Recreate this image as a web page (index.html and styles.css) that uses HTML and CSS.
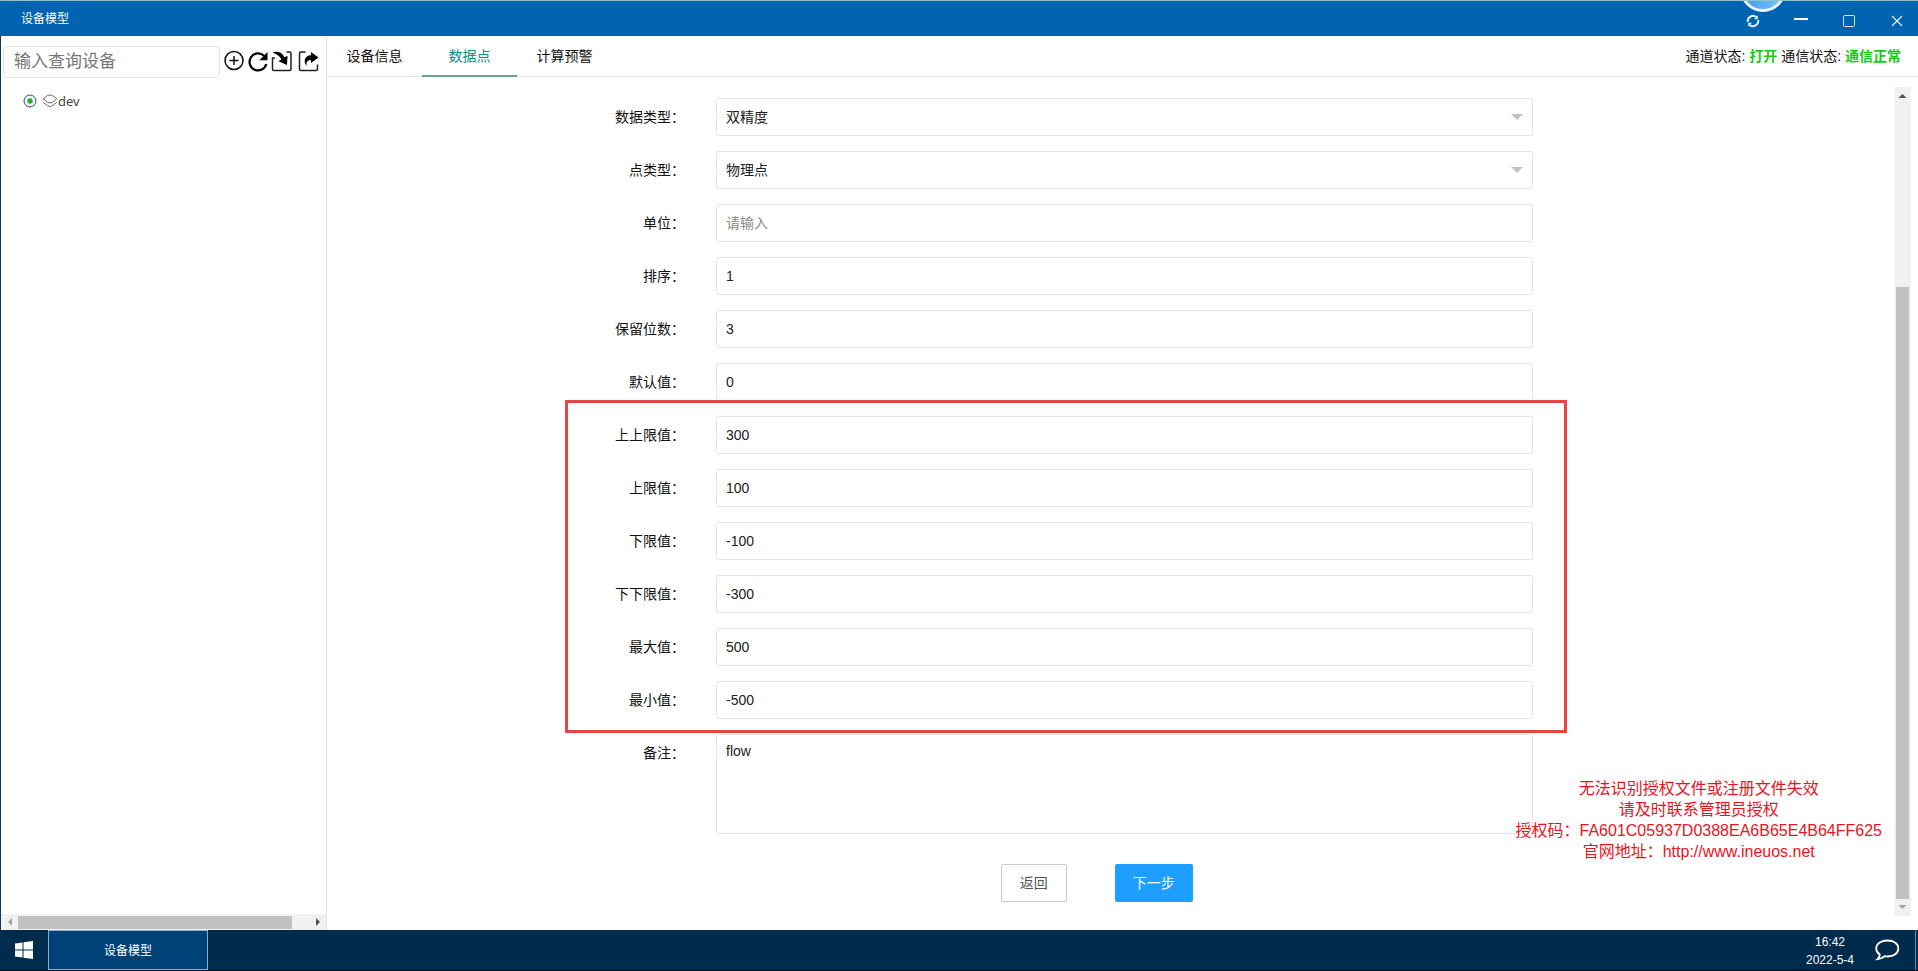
FILE: index.html
```html
<!DOCTYPE html>
<html lang="zh-CN">
<head>
<meta charset="utf-8">
<title>设备模型</title>
<link rel="stylesheet" href="styles.css">
</head>
<body>
<div class="desktop">
  <header class="titlebar">
    <h1 class="title">设备模型</h1>
    <div class="window-buttons">
      <button class="win-btn" aria-label="刷新"><svg width="14" height="14" viewBox="0 0 14 14"><g fill="none" stroke="#e6f1fa" stroke-width="2"><path d="M1.900 8A5.200 5.200 0 0 1 10.300 3"/><path d="M12.100 6A5.200 5.200 0 0 1 3.700 11"/></g><path d="M11.800 1.200V5.200H8zM2.200 12.800V8.800H6z" fill="#e6f1fa"/></svg></button>
      <button class="win-btn" aria-label="最小化"><svg width="14" height="14" viewBox="0 0 14 14"><path d="M0 5h14" stroke="#fff" stroke-width="2"/></svg></button>
      <button class="win-btn" aria-label="最大化"><svg width="14" height="14" viewBox="0 0 14 14"><rect x="1.500" y="1.500" width="11" height="11" rx="1" fill="none" stroke="#d5e6f5"/></svg></button>
      <button class="win-btn" aria-label="关闭"><svg width="14" height="14" viewBox="0 0 14 14"><path d="M2 2l10 10M12 2L2 12" stroke="#e6f1fa" stroke-width="1.200"/></svg></button>
    </div>
    <span class="bubble"></span>
  </header>

  <div class="window">
    <aside class="sidebar">
      <div class="search">
        <input class="search-input" type="text" placeholder="输入查询设备" aria-label="输入查询设备">
        <div class="tools">
          <button class="tool" aria-label="添加"><svg width="22" height="22" viewBox="0 0 22 22"><g fill="none" stroke="#111" stroke-width="1.500"><circle cx="11" cy="10.500" r="9"/><path d="M11 6v9M6.500 10.500h9"/></g></svg></button>
          <button class="tool" aria-label="刷新"><svg width="22" height="22" viewBox="0 0 22 22"><path d="M17 5.800A8.500 8.500 0 1 0 19.300 14" fill="none" stroke="#000" stroke-width="2.200"/><path d="M20.500 2v8.200h-8.200z"/></svg></button>
          <button class="tool" aria-label="导入"><svg width="22" height="22" viewBox="0 0 22 22"><path d="M4 8H1.500V19Q1.500 20.500 3 20.500H18.500Q20 20.500 20 19V3.500Q20 2 18.500 2H15.500" fill="none" stroke="#222" stroke-width="1.500"/><path d="M1.500 2.500C6 .8 11 2.200 13.500 7.200L16.500 5.800L16 15L7.500 11.200L10.500 9.300C8.500 6 5.500 3.800 1.500 2.500Z"/></svg></button>
          <button class="tool tool-last" aria-label="导出"><svg width="22" height="22" viewBox="0 0 22 22"><path d="M7.500 2H3Q1.500 2 1.500 3.500V19Q1.500 20.500 3 20.500H18Q19.500 20.500 19.500 19V14.500" fill="none" stroke="#222" stroke-width="1.500"/><path d="M13 2L20.500 7.500L13 13V10C9.500 10 8 12 8.500 16C4.800 11 7 5.500 13 5Z"/></svg></button>
        </div>
      </div>
      <div class="tree">
        <svg width="14" height="14" viewBox="0 0 14 14"><circle cx="7" cy="7" r="6" fill="#eef4fa" stroke="#2d4f72"/><circle cx="7" cy="7" r="2.700" fill="#2fae2f"/></svg>
        <a class="node" href="#"><svg width="16" height="14" viewBox="0 0 16 14"><g fill="none" stroke="#666"><path d="M1.200 4.800L5.500 1.500Q8 .3 10.500 1.500L14.800 4.800L10.500 8.300Q8 9.800 5.500 8.300Z"/><path d="M1.200 8.300L5.500 11.700Q8 13.300 10.500 11.700L14.800 8.300"/></g></svg>dev</a>
      </div>
      <div class="hscroll">
        <svg width="17" height="16" viewBox="0 0 17 16"><path d="M11 4v8L7 8z" fill="#a3a3a3"/></svg>
        <span class="htrack"><span class="hthumb"></span></span>
        <svg width="17" height="16" viewBox="0 0 17 16"><path d="M7 4v8l4-4z" fill="#505050"/></svg>
      </div>
    </aside>

    <main class="content">
      <nav class="tabs">
        <button class="tab">设备信息</button>
        <button class="tab tab-active">数据点</button>
        <button class="tab">计算预警</button>
        <p class="status">通道状态: <b>打开</b> 通信状态: <b>通信正常</b></p>
      </nav>
      <div class="body">
        <form class="form">
          <div class="row"><label for="dtype">数据类型：</label><div class="select"><select class="field" id="dtype"><option>双精度</option></select></div></div>
          <div class="row"><label for="ptype">点类型：</label><div class="select"><select class="field" id="ptype"><option>物理点</option></select></div></div>
          <div class="row"><label for="unit">单位：</label><input class="field" id="unit" type="text" placeholder="请输入"></div>
          <div class="row"><label for="sort">排序：</label><input class="field" id="sort" type="text" value="1"></div>
          <div class="row"><label for="digits">保留位数：</label><input class="field" id="digits" type="text" value="3"></div>
          <div class="row"><label for="default">默认值：</label><input class="field" id="default" type="text" value="0"></div>
          <div class="limits">
            <div class="row"><label for="hh">上上限值：</label><input class="field" id="hh" type="text" value="300"></div>
            <div class="row"><label for="h">上限值：</label><input class="field" id="h" type="text" value="100"></div>
            <div class="row"><label for="l">下限值：</label><input class="field" id="l" type="text" value="-100"></div>
            <div class="row"><label for="ll">下下限值：</label><input class="field" id="ll" type="text" value="-300"></div>
            <div class="row"><label for="max">最大值：</label><input class="field" id="max" type="text" value="500"></div>
            <div class="row"><label for="min">最小值：</label><input class="field" id="min" type="text" value="-500"></div>
            <span class="frame"></span>
          </div>
          <div class="row"><label for="note">备注：</label><textarea class="field note" id="note">flow</textarea></div>
          <div class="actions">
            <button class="btn" type="button">返回</button>
            <button class="btn btn-primary" type="button">下一步</button>
          </div>
        </form>
        <div class="vscroll">
          <svg width="17" height="17" viewBox="0 0 17 17"><path d="M4.500 11h8l-4-4z" fill="#505050"/></svg>
          <span class="vtrack"><span class="vthumb"></span></span>
          <svg width="17" height="17" viewBox="0 0 17 17"><path d="M4.500 6h8l-4 4z" fill="#a3a3a3"/></svg>
        </div>
      </div>
    </main>
  </div>

  <div class="license">
    <p>无法识别授权文件或注册文件失效</p>
    <p>请及时联系管理员授权</p>
    <p>授权码：FA601C05937D0388EA6B65E4B64FF625</p>
    <p>官网地址：http://www.ineuos.net</p>
  </div>

  <footer class="taskbar">
    <button class="start" aria-label="开始"><svg width="18" height="18" viewBox="0 0 18 18" fill="#fff"><path d="M0 2.600L7.500 1.500V8.500H0zM8.500 1.300L18 0V8.500H8.500zM0 9.500H7.500V16.500L0 15.400zM8.500 9.500H18V18L8.500 16.700z"/></svg></button>
    <button class="task">设备模型</button>
    <div class="clock"><span>16:42</span><span>2022-5-4</span></div>
    <button class="chat" aria-label="消息"><svg width="26" height="24" viewBox="0 0 26 24"><path d="M13.500 2.500C20 2.500 24.300 5.800 24.300 10.500S20 18.500 13.500 18.500Q12 18.500 10.500 18.200Q7.500 20.800 3.500 21.200Q5.800 19 5.800 16.600Q2.200 14.200 2.200 10.500C2.200 5.800 7 2.500 13.500 2.500Z" fill="none" stroke="#fff" stroke-width="1.800"/></svg></button>
    <span class="peek"></span>
  </footer>
</div>
</body>
</html>
```
FILE: styles.css
```css
* { box-sizing: border-box; }
body, h1, p { margin: 0; }
body {
  font: 14px/20px "Liberation Sans", "Noto Sans CJK SC", sans-serif;
  color: #222;
  background: #fff;
}
button { font: inherit; border: 0; padding: 0; background: none; cursor: pointer; }
svg { display: block; flex: none; }

.desktop {
  position: relative;
  display: flex;
  flex-direction: column;
  min-height: 100vh;
}

.titlebar {
  position: relative;
  overflow: hidden;
  display: flex;
  justify-content: space-between;
  align-items: center;
  height: 36px;
  padding: 0 14px 0 21px;
  border-top: 1px solid #8fc4cf;
  background: #0063b1;
  color: #fff;
}
.title { font-size: 12px; font-weight: 400; }
.window-buttons { display: flex; gap: 34px; padding-top: 4px; }
.bubble {
  position: absolute;
  right: 132px;
  bottom: 24px;
  width: 46px;
  height: 46px;
  border: 3px solid #eaf5ff;
  border-radius: 50%;
  background: linear-gradient(100deg, #3c92ec, #7cc6fb);
}

.window {
  flex: 1;
  display: flex;
  border-left: 1px solid #0b3a55;
}
.sidebar {
  display: flex;
  flex-direction: column;
  width: 326px;
  border-right: 1px solid #e2e2e2;
}
.search { display: flex; padding: 10px 0 0 2px; }
.search-input {
  width: 217px;
  height: 32px;
  padding: 0 10px;
  border: 1px solid #e2e2e2;
  border-radius: 4px;
  font: 17px "Liberation Sans", "Noto Sans CJK SC", sans-serif;
}
.search-input::placeholder { color: #757575; opacity: 1; }
.tools { display: flex; gap: 2px; padding: 4px 0 0 3px; }
.tool { height: 22px; }
.tool-last { margin-left: 3px; }
.tree {
  flex: 1;
  display: flex;
  align-items: flex-start;
  gap: 5px;
  padding: 15px 22px;
}
.tree > svg { margin-top: 1px; }
.node {
  display: flex;
  align-items: center;
  height: 16px;
  font: 13px/16px "Noto Sans", sans-serif;
  color: #444;
  text-decoration: none;
}
.hscroll { display: flex; height: 16px; background: #f1f1f1; }
.htrack { flex: 1; padding: 2px 0 1px; }
.hthumb { display: block; width: 94%; height: 13px; background: #c1c1c1; }

.content { flex: 1; display: flex; flex-direction: column; }
.tabs {
  display: flex;
  height: 41px;
  border-bottom: 1px solid #e2e2e2;
}
.tab { width: 95px; height: 41px; padding-bottom: 2px; color: #111; }
.tab-active { color: #009688; border-bottom: 2px solid #6aa583; padding-bottom: 0; }
.status { margin-left: auto; padding: 10px 17px 0 0; color: #111; }
.status b { color: #10d010; }

.body { flex: 1; display: flex; padding: 10px 7px 14px 0; }
.form { flex: 1; padding-top: 11px; }
.row {
  display: grid;
  grid-template-columns: 358fr 817fr 330fr;
  column-gap: 31px;
  margin-bottom: 15px;
}
.row label { padding-top: 9px; text-align: right; color: #111; }
.field {
  display: block;
  width: 100%;
  height: 38px;
  padding: 0 9px;
  border: 1px solid #e6e6e6;
  border-radius: 2px;
  background: #fff;
  color: #222;
  font: 14px/20px "Liberation Sans", "Noto Sans CJK SC", sans-serif;
}
.field::placeholder { color: #8a8a8a; opacity: 1; }
select.field { appearance: none; }
.note { height: 100px; padding: 6px 9px; resize: none; }
.select { position: relative; }
.select::after {
  content: "";
  position: absolute;
  top: 16px;
  right: 10px;
  border: 6px solid transparent;
  border-top-color: #c2c2c2;
  border-bottom: 0;
}
.limits { position: relative; }
.frame {
  position: absolute;
  top: -16px;
  bottom: -14px;
  left: 238px;
  right: 328px;
  left: 15.2%;
  right: 20.9%;
  border: 3px solid #e64545;
  pointer-events: none;
}
.actions {
  display: flex;
  gap: 48px;
  padding: 15px 0 0 43%;
}
.btn {
  height: 38px;
  padding: 0 18px;
  border: 1px solid #c9c9c9;
  border-radius: 2px;
  background: #fff;
  color: #555;
}
.btn-primary { border: 0; background: #1e9fff; color: #fff; }

.vscroll {
  display: flex;
  flex-direction: column;
  width: 17px;
  background: #f1f1f1;
}
.vtrack { flex: 1; display: flex; flex-direction: column; justify-content: flex-end; padding: 0 2px; }
.vthumb { height: 77%; background: #c1c1c1; }

.license {
  position: absolute;
  right: 36px;
  bottom: 109px;
  font-size: 16px;
  line-height: 21px;
  text-align: center;
  color: #e8141c;
}

.taskbar {
  display: flex;
  align-items: center;
  height: 41px;
  border-bottom: 1px solid #020a14;
  background: #002b4d;
  color: #fff;
}
.start { display: flex; justify-content: center; width: 48px; }
.task {
  width: 160px;
  height: 40px;
  padding-top: 2px;
  border: 1px solid #8fb0cc;
  background: #004178;
  color: #fff;
  font-size: 12px;
}
.clock {
  display: flex;
  flex-direction: column;
  align-items: center;
  margin-left: auto;
  padding-top: 2px;
  font-size: 12px;
  line-height: 18px;
}
.chat { margin: 0 15px 0 20px; }
.peek { width: 3px; height: 40px; border-left: 1px solid #6d879d; }
```
